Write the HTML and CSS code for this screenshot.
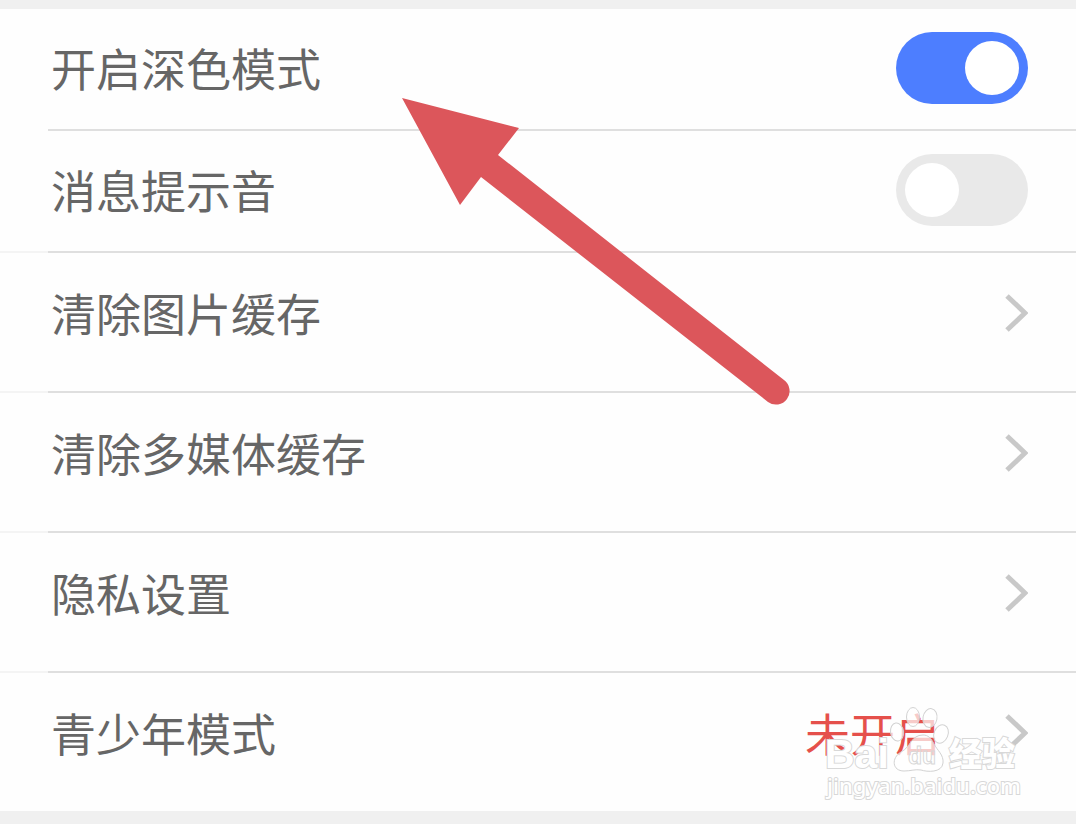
FILE: index.html
```
<!DOCTYPE html>
<html lang="zh-CN">
<head>
    <meta charset="UTF-8">
    <meta name="viewport" content="width=device-width, initial-scale=1.0">
    <title>设置</title>
    <link rel="stylesheet" href="styles.css">
</head>
<body>
    <main class="settings">
        <label class="row">
            <span class="row-title">开启深色模式</span>
            <input type="checkbox" class="switch" checked>
        </label>
        <label class="row">
            <span class="row-title">消息提示音</span>
            <input type="checkbox" class="switch">
        </label>
        <a class="row row-link" href="#">
            <span class="row-title">清除图片缓存</span>
            <svg class="chevron" viewBox="0 0 24 40"><path d="M3 3 L21 20 L3 37"/></svg>
        </a>
        <a class="row row-link" href="#">
            <span class="row-title">清除多媒体缓存</span>
            <svg class="chevron" viewBox="0 0 24 40"><path d="M3 3 L21 20 L3 37"/></svg>
        </a>
        <a class="row row-link" href="#">
            <span class="row-title">隐私设置</span>
            <svg class="chevron" viewBox="0 0 24 40"><path d="M3 3 L21 20 L3 37"/></svg>
        </a>
        <a class="row row-link" href="#">
            <span class="row-title">青少年模式</span>
            <span class="row-value">未开启</span>
            <svg class="chevron" viewBox="0 0 24 40"><path d="M3 3 L21 20 L3 37"/></svg>
        </a>
    </main>

    <!-- Arrow pointing at the first setting -->
    <svg class="arrow" viewBox="0 0 390 308">
        <path d="M0 0 L117 30 L96 57 L382 282 A13.5 13.5 0 0 1 366 304 L79 79 L58 107 Z"/>
    </svg>

    <!-- Watermark -->
    <svg class="watermark" viewBox="0 0 200 96">
        <ellipse cx="72" cy="34" rx="6.5" ry="9" transform="rotate(-8 72 34)"/>
        <ellipse cx="88" cy="19" rx="6.5" ry="9.5"/>
        <ellipse cx="105" cy="20" rx="7" ry="9.5" transform="rotate(10 105 20)"/>
        <ellipse cx="116" cy="36" rx="7" ry="9.5" transform="rotate(22 116 36)"/>
        <path d="M98 37 C86 37 86 49 76 54 C66 60 67 73 79 73 C86 73 90 71 96 72 C102 74 117 75 118 65 C119 57 112 52 109 46 C106 40 103 37 98 37 Z"/>
        <text class="mark-name" x="0" y="70">Bai</text>
        <text class="mark-du" x="83" y="66">du</text>
        <text class="mark-cn" x="124" y="68">经验</text>
        <text class="mark-url" x="2" y="96">jingyan.baidu.com</text>
    </svg>
</body>
</html>
```

FILE: styles.css
```
* {
    margin: 0;
    padding: 0;
    box-sizing: border-box;
}

body {
    position: relative;
    min-height: 100vh;
    padding-top: 9px;
    background-color: #f0f0f0;
    font-family: "Noto Sans CJK SC", sans-serif;
    overflow-x: hidden;
}

.settings {
    background-color: #fefefe;
}

.row {
    display: flex;
    align-items: center;
    height: 122px;
    padding: 0 48px 2px 51px;
    border-bottom: 2px solid;
    border-image: linear-gradient(to right, #f4f4f4 49px, #dfdfdf 49px) 1;
    color: #666;
    font-size: 45px;
    line-height: 60px;
    text-decoration: none;
}

.row:first-child {
    border-image: linear-gradient(to right, #fefefe 49px, #dfdfdf 49px) 1;
}

.row-link {
    height: 140px;
    padding-bottom: 18px;
}

.row:last-child {
    height: 138px;
    border-bottom: none;
}

.row-title {
    flex: 1;
}

.row-value {
    margin-right: 64px;
    color: #e5504b;
}

.switch {
    appearance: none;
    display: flex;
    width: 132px;
    height: 72px;
    padding: 9px;
    border-radius: 36px;
    background-color: #e9e9e9;
}

.switch::before {
    content: "";
    width: 54px;
    height: 54px;
    border-radius: 50%;
    background-color: #fff;
}

.switch:checked {
    justify-content: flex-end;
    background-color: #4d7eff;
}

.chevron {
    width: 24px;
    height: 40px;
    fill: none;
    stroke: #c8c8c8;
    stroke-width: 5;
}

.arrow {
    position: absolute;
    top: 98px;
    left: 402px;
    width: 390px;
    height: 308px;
    fill: #dc565b;
    pointer-events: none;
}

.watermark {
    position: absolute;
    top: 698px;
    right: 51px;
    width: 200px;
    height: 96px;
    overflow: visible;
    fill: rgba(255, 255, 255, 0.7);
    stroke: #d2d2d2;
    stroke-width: 1;
    pointer-events: none;
}

.watermark text {
    fill: #fff;
    stroke: #d8d8d8;
    stroke-width: 2;
    paint-order: stroke;
}

.mark-name {
    font: bold 41px "Liberation Sans", sans-serif;
}

.watermark .mark-du {
    font: bold 23px "Liberation Sans", sans-serif;
    fill: none;
    stroke-width: 1;
}

.mark-cn {
    font: 900 33px "Noto Sans CJK SC", sans-serif;
}

.mark-url {
    font: 500 22px "Noto Sans", sans-serif;
}
```
